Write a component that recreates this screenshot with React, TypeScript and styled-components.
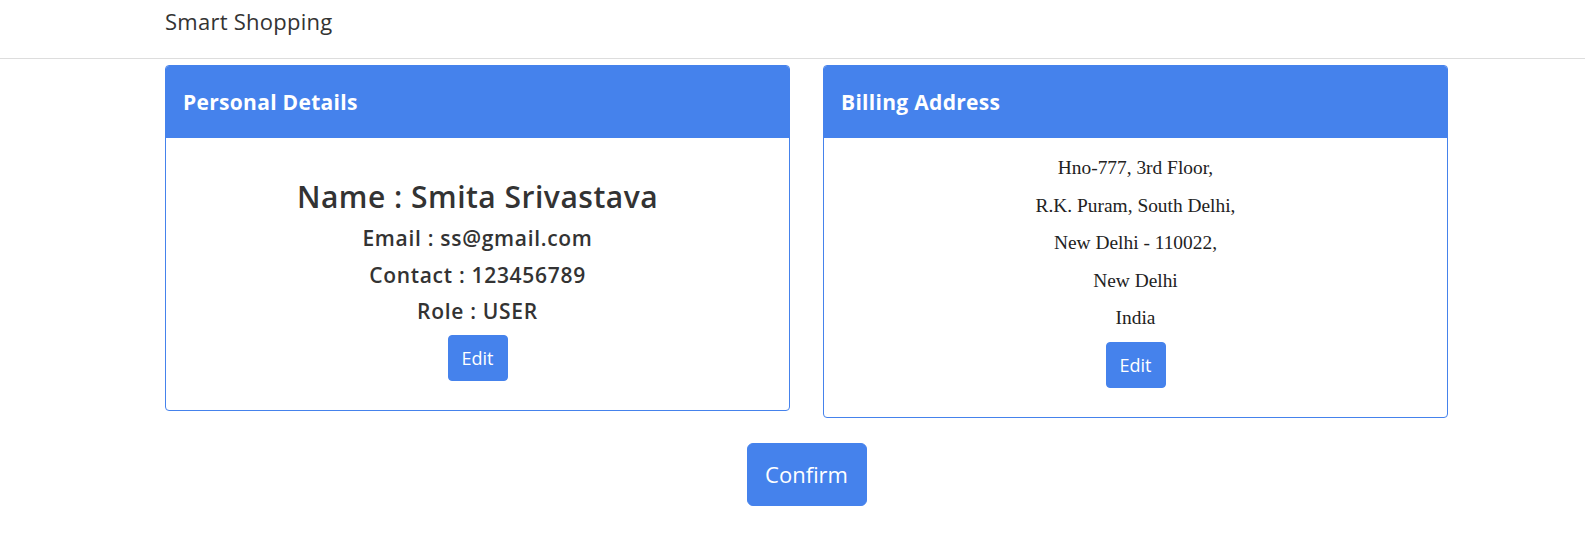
import React from "react";
import styled, { createGlobalStyle } from "styled-components";

const BLUE = "#4582ec";
const SANS = `"Open Sans", "Noto Sans", "DejaVu Sans", sans-serif`;
const SERIF = `"Liberation Serif", "DejaVu Serif", serif`;

const GlobalStyle = createGlobalStyle`
  html, body {
    margin: 0;
    padding: 0;
    background: #ffffff;
  }
  body {
    font-family: ${SANS};
    color: #333333;
  }
  * { box-sizing: border-box; }
`;

const Navbar = styled.header`
  height: 59px;
  border-bottom: 1px solid #dddddd;
  display: flex;
  align-items: flex-start;
  padding: 7px 0 0 165px;
`;

const Brand = styled.a`
  font-family: ${SANS};
  font-size: 22px;
  line-height: 28px;
  font-weight: 400;
  color: #333333;
  text-decoration: none;
  letter-spacing: 0.25px;
`;

const Container = styled.main`
  width: 1283px;
  margin: 6px 0 0 165px;
  display: flex;
  flex-direction: column;
  align-items: center;
`;

const Row = styled.div`
  width: 100%;
  display: grid;
  grid-template-columns: 625px 625px;
  column-gap: 33px;
  align-items: start;
`;

const Card = styled.section`
  border: 1px solid ${BLUE};
  border-radius: 4px;
  overflow: hidden;
  background: #ffffff;
`;

const CardHeader = styled.div`
  background: ${BLUE};
  height: 72px;
  display: flex;
  align-items: center;
  padding: 0 17px;
`;

const CardTitle = styled.h4`
  margin: 0;
  font-family: ${SANS};
  font-size: 21px;
  letter-spacing: 0.3px;
  font-weight: 700;
  color: #ffffff;
`;

const CardBody = styled.div<{ $pt: number; $pb: number }>`
  padding: ${(p) => p.$pt}px 20px ${(p) => p.$pb}px;
  display: flex;
  flex-direction: column;
  align-items: center;
  text-align: center;
`;

const Name = styled.h2`
  margin: 24px 0 0;
  font-family: ${SANS};
  font-size: 30px;
  letter-spacing: 0.5px;
  line-height: 36px;
  font-weight: 600;
  color: #333333;
`;

const Detail = styled.h4`
  margin: 10.25px 0 0;
  font-family: ${SANS};
  font-size: 21px;
  letter-spacing: 0.7px;
  line-height: 26px;
  font-weight: 600;
  color: #333333;
`;

const AddressLine = styled.p`
  margin: 0 0 13.6px;
  font-family: ${SERIF};
  font-size: 19.4px;
  line-height: 24px;
  color: #222222;

  &:last-of-type {
    margin-bottom: 11.6px;
  }
`;

const Button = styled.button<{ $size: "lg" | "xl" }>`
  font-family: ${SANS};
  font-weight: 400;
  color: #ffffff;
  background: ${BLUE};
  border: 1px solid ${BLUE};
  cursor: pointer;
  display: inline-flex;
  align-items: center;
  justify-content: center;
  padding: 0;
  width: ${(p) => (p.$size === "lg" ? 60 : 120)}px;
  height: ${(p) => (p.$size === "lg" ? 46 : 63)}px;
  font-size: ${(p) => (p.$size === "lg" ? 18 : 22)}px;
  border-radius: ${(p) => (p.$size === "lg" ? 4 : 6)}px;
`;

const EditButton = styled(Button)<{ $mt: number }>`
  margin-top: ${(p) => p.$mt}px;
`;

const ConfirmButton = styled(Button)`
  margin-top: 25px;
`;

const address = [
  "Hno-777, 3rd Floor,",
  "R.K. Puram, South Delhi,",
  "New Delhi - 110022,",
  "New Delhi",
  "India",
];

export default function App() {
  return (
    <>
      <GlobalStyle />
      <Navbar>
        <Brand href="#">Smart Shopping</Brand>
      </Navbar>
      <Container>
        <Row>
          <Card>
            <CardHeader>
              <CardTitle>Personal Details</CardTitle>
            </CardHeader>
            <CardBody $pt={17} $pb={29}>
              <Name>Name : Smita Srivastava</Name>
              <Detail>Email : ss@gmail.com</Detail>
              <Detail>Contact : 123456789</Detail>
              <Detail>Role : USER</Detail>
              <EditButton $size="lg" $mt={11.5}>
                Edit
              </EditButton>
            </CardBody>
          </Card>
          <Card>
            <CardHeader>
              <CardTitle>Billing Address</CardTitle>
            </CardHeader>
            <CardBody $pt={18} $pb={29}>
              {address.map((line) => (
                <AddressLine key={line}>{line}</AddressLine>
              ))}
              <EditButton $size="lg" $mt={0}>
                Edit
              </EditButton>
            </CardBody>
          </Card>
        </Row>
        <ConfirmButton $size="xl">Confirm</ConfirmButton>
      </Container>
    </>
  );
}
